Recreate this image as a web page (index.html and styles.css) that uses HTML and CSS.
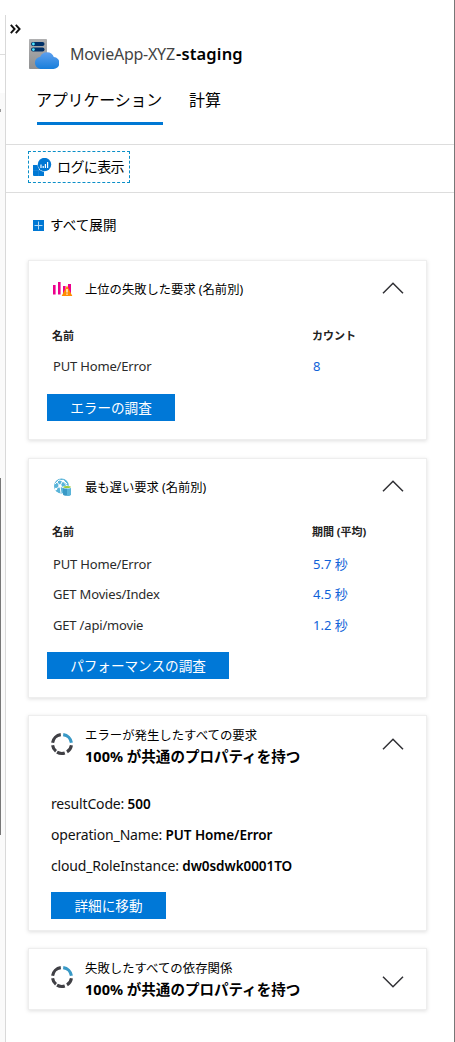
FILE: index.html
```html
<!DOCTYPE html>
<html lang="ja">
<head>
<meta charset="utf-8">
<title>MovieApp-XYZ-staging</title>
<link rel="stylesheet" href="styles.css">
</head>
<body>
<svg class="defs" width="0" height="0">
  <symbol id="up" viewBox="0 0 22 12"><path d="M1 11.2 11 1.2l10 10" fill="none" stroke="#303035" stroke-width="1.5"/></symbol>
  <symbol id="down" viewBox="0 0 22 12"><path d="M1 .8l10 10 10-10" fill="none" stroke="#303035" stroke-width="1.5"/></symbol>
  <symbol id="ring" viewBox="0 0 24 24">
    <g fill="none" stroke-width="3.1">
      <path d="M13.2 2.6A9.5 9.5 0 0 1 21.4 10.8" stroke="#3999c6"/>
      <path d="M2.6 10.8A9.5 9.5 0 0 1 10.8 2.6M2.6 13.2A9.5 9.5 0 0 0 6 19.3M7 20.1A9.5 9.5 0 0 0 14.8 21M17 19.9A9.5 9.5 0 0 0 21.4 13.2" stroke="#404045"/>
    </g>
  </symbol>
</svg>
<div class="page">
  <div class="rail"><div class="rail-top"></div><div class="rail-body"><i class="rail-arrow"></i><i class="rail-thumb"></i></div></div>
  <main class="panel">
    <div class="collapse"><svg width="11" height="10" viewBox="0 0 11 10"><path d="M.8.8 4.6 5l-3.800 4.200M5.800.8 9.600 5l-3.800 4.200" fill="none" stroke="#111" stroke-width="1.900"/></svg></div>
    <header class="title">
      <svg width="30" height="31" viewBox="0 0 30 31">
        <defs>
          <linearGradient id="cl" x1="0" y1="0" x2="0" y2="1"><stop offset="0" stop-color="#5ea0ef"/><stop offset="1" stop-color="#177edb"/></linearGradient>
          <linearGradient id="sv" x1="0" y1="0" x2="0" y2="1"><stop offset="0" stop-color="#b0b0b1"/><stop offset="1" stop-color="#8f9091"/></linearGradient>
        </defs>
        <rect width="18" height="30" rx=".8" fill="url(#sv)"/>
        <rect x="2" y="3" width="13.500" height="4" rx="2" fill="#003067"/><rect x="2" y="8.600" width="13.500" height="4" rx="2" fill="#003067"/>
        <circle cx="4.400" cy="5" r="1.400" fill="#50e6ff"/><circle cx="4.400" cy="10.600" r="1.400" fill="#50e6ff"/>
        <path d="M11.500 30a6.200 6.200 0 0 1-.3-12.300 7.300 7.300 0 0 1 13.600 0.300A6 6 0 0 1 24 30Z" fill="url(#cl)"/>
      </svg>
      <h1><span class="name">MovieApp-XYZ</span><span class="slot">-staging</span></h1>
    </header>
    <nav class="tabs"><a class="tab active">アプリケーション</a><a class="tab calc">計算</a></nav>
    <div class="toolbar">
      <button class="logs">
        <svg width="19" height="19" viewBox="0 0 19 19"><path d="M0 7h6v5h5v6H1a1 1 0 0 1-1-1Z" fill="#0078d4"/><path d="M0 12.500h11M5.500 12v6" stroke="#338fdf" stroke-width=".5"/><circle cx="11.500" cy="6.800" r="7" fill="#fff"/><circle cx="11.500" cy="6.500" r="6.700" fill="#0078d4"/><path d="M8 10V6.500M10.200 10V8M12.400 10V6M14.600 10V4" stroke="#fff" stroke-width="1.200"/></svg>
        <span>ログに表示</span>
      </button>
    </div>
    <div class="expand"><svg width="11" height="11" viewBox="0 0 11 11"><path fill="#0078d4" d="M0 0h11v11H0z"/><path d="M5.500 1.500v8M1.500 5.500h8" stroke="#b9dbf5"/></svg><span>すべて展開</span></div>

    <div class="cards">
      <section class="card failed">
        <div class="head">
          <svg class="ico" width="20" height="16" viewBox="0 0 20 16"><path d="M0 4h2.600v9.500H0zM5 1h2.600v12.500H5zM10 5h2.600v8.500H10zM15 3h3v10h-3z" fill="#ec008c"/><path d="M14 4.500 19.300 15H8.700Z" fill="#ff8c00"/><path d="M14 8v3.500M14 12.500v1.300" stroke="#fff" stroke-width="1.300"/></svg>
          <span class="label l1">上位の失敗した要求 (名前別)</span>
          <svg class="chev" width="22" height="12"><use href="#up"/></svg>
        </div>
        <div class="row th"><span>名前</span><span>カウント</span></div>
        <div class="row"><span>PUT Home/Error</span><a>8</a></div>
        <button class="btn b1">エラーの調査</button>
      </section>

      <section class="card slow">
        <div class="head">
          <svg class="ico" width="20" height="20" viewBox="0 0 20 20"><circle cx="8.500" cy="9" r="7.500" fill="#59b4d9"/><path d="M2 7l4-4 5 1 3 3M3 12l4-3 6 3M7 9l3-6M7 9l-3-4M7 9l1 7M10 4l5 6" fill="none" stroke="#fff" stroke-width="1"/><circle cx="7" cy="9" r="1.800" fill="#fff"/><circle cx="10" cy="4" r="1.300" fill="#fff"/><circle cx="3" cy="12" r="1.200" fill="#fff"/><path d="M10 10.500v7c0 1.800 8 1.800 8 0v-7Z" fill="#3999c6"/><path d="M14 10.500v8.300c2.200 0 4-.5 4-1.300v-7Z" fill="#59b4d9"/><ellipse cx="14" cy="10" rx="4.400" ry="1.600" fill="#fff"/><ellipse cx="14" cy="10" rx="3.800" ry="1.100" fill="#9ccb3c"/></svg>
          <span class="label l2">最も遅い要求 (名前別)</span>
          <svg class="chev" width="22" height="12"><use href="#up"/></svg>
        </div>
        <div class="row th"><span>名前</span><span>期間 (平均)</span></div>
        <div class="row"><span>PUT Home/Error</span><a>5.7 秒</a></div>
        <div class="row"><span>GET Movies/Index</span><a>4.5 秒</a></div>
        <div class="row last"><span>GET /api/movie</span><a>1.2 秒</a></div>
        <button class="btn b2">パフォーマンスの調査</button>
      </section>

      <section class="card requests">
        <div class="head two">
          <svg class="ico" width="24" height="24"><use href="#ring"/></svg>
          <div class="lines"><span class="s1">エラーが発生したすべての要求</span><b>100% が共通のプロパティを持つ</b></div>
          <svg class="chev" width="22" height="12"><use href="#up"/></svg>
        </div>
        <div class="props">
          <p><span class="p1">resultCode: </span><b class="v1">500</b></p>
          <p><span class="p2">operation_Name: </span><b class="v2">PUT Home/Error</b></p>
          <p><span class="p3">cloud_RoleInstance: </span><b class="v3">dw0sdwk0001TO</b></p>
        </div>
        <button class="btn b3">詳細に移動</button>
      </section>

      <section class="card deps">
        <div class="head two">
          <svg class="ico" width="24" height="24"><use href="#ring"/></svg>
          <div class="lines"><span class="s2">失敗したすべての依存関係</span><b>100% が共通のプロパティを持つ</b></div>
          <svg class="chev" width="22" height="12"><use href="#down"/></svg>
        </div>
      </section>
    </div>
  </main>
</div>
</body>
</html>
```
FILE: styles.css
```css
* { box-sizing: border-box; }
body {
  margin: 0;
  background: #fff;
  color: #111;
  font-family: "Noto Sans", "Noto Sans CJK JP", sans-serif;
  font-size: 13px;
  white-space: nowrap;
}
.defs { position: absolute; }
svg { display: block; flex: none; }
.page { display: flex; height: 1042px; border-right: 1px solid #777; overflow: hidden; }

/* strip of the neighbouring pane */
.rail { width: 5px; flex: none; }
.rail-top { height: 55px; border-bottom: 1px solid #ddd; }
.rail-body { height: 987px; padding-top: 54px; background: linear-gradient(#fff 38px, #fafafa 38px); }
.rail-arrow { display: block; width: 1px; height: 3px; background: #999; }
.rail-thumb { display: block; width: 1px; height: 357px; margin-top: 366px; background: #777; }

.panel { flex: 1; margin-top: 15px; border-left: 1px solid #d9d9d9; }
.collapse { height: 24px; padding: 9px 0 0 4px; }
.title { display: flex; height: 37px; padding-left: 23px; gap: 11px; }
.title h1 { display: flex; margin: 0; font-size: 16px; line-height: 30px; font-weight: 400; }
.name { color: #444; letter-spacing: -.25px; width: 106px; }
.slot { font-weight: 600; font-size: 16.5px; letter-spacing: .15px; color: #000; }

.tabs { display: flex; gap: 27px; height: 69px; padding: 10px 0 0 31px; border-bottom: 1px solid #ddd; font-size: 16px; }
.tab { height: 39px; line-height: 28px; text-indent: -1px; color: #000; }
.tab.active { width: 126px; border-bottom: 3px solid #0078d4; letter-spacing: -.2px; }
.toolbar { height: 48px; padding: 6px 0 0 22px; border-bottom: 1px solid #ddd; }
.logs {
  display: flex; align-items: center; gap: 5px; width: 102px; height: 32px; padding: 0 0 0 4px;
  background: #fff; border: 1px dashed #0a8fc8; color: #000; font: inherit; font-size: 14px; letter-spacing: -.6px;
}
.logs span { padding-bottom: 2px; }
.expand { display: flex; align-items: center; gap: 6px; height: 67px; padding: 0 0 2px 27px; font-size: 13.5px; letter-spacing: .1px; color: #000; }
.expand span { padding-bottom: 3px; }

.cards { display: flex; flex-direction: column; gap: 18px; padding-left: 22px; }
.card { width: 399px; border: 1px solid #eee; background: #fff; box-shadow: 0 1px 4px rgba(0,0,0,.13); }
.failed { height: 180px; }
.slow { height: 240px; }
.requests { height: 216px; margin-top: -1px; }
.deps { height: 62px; margin-top: -1px; }
.head { display: flex; align-items: center; height: 57px; padding: 0 22px 2px 24px; }
.head .ico { margin-right: 12px; }
.chev { margin: 0 0 2px auto; }
.label { font-size: 12.3px; color: #000; }
.row { display: grid; grid-template-columns: 260px 1fr; height: 30px; line-height: 30px; padding-left: 24px; color: #2b2b2b; letter-spacing: -.17px; }
.row.th { height: 33px; line-height: 34px; padding-left: 23px; color: #222; font-size: 11px; font-weight: 700; letter-spacing: 0; }
.failed .th { line-height: 36px; }
.slow .th { line-height: 32px; }
.row.last { height: 31px; line-height: 32px; }
.row a { color: #0f62d8; letter-spacing: 0; }
.btn { display: block; height: 27px; padding: 0; border: 0; background: #0078d7; color: #fff; font: inherit; font-size: 13.6px; line-height: 27px; text-align: center; }
.b1 { width: 128px; margin: 13px 0 0 18px; }
.b2 { width: 182px; margin: 12px 0 0 18px; }
.b3 { width: 115px; margin: 11px 0 0 22px; }
.head.two { height: 58px; padding-left: 21px; padding-bottom: 0; }
.two .ico { margin: 0 11px 2px 0; }
.deps .chev { margin: 8px 0 0 auto; }
.lines { display: flex; flex-direction: column; padding-top: 2px; font-size: 12.4px; line-height: 20px; color: #000; }
.lines b { font-size: 14.5px; letter-spacing: .02px; }
.props { padding: 14px 0 0 22px; font-size: 14px; }
.props p { margin: 0; height: 31px; line-height: 31px; white-space: pre; letter-spacing: -.17px; }
.props b { font-weight: 600; font-size: 13.5px; letter-spacing: -.05px; color: #000; }
```
